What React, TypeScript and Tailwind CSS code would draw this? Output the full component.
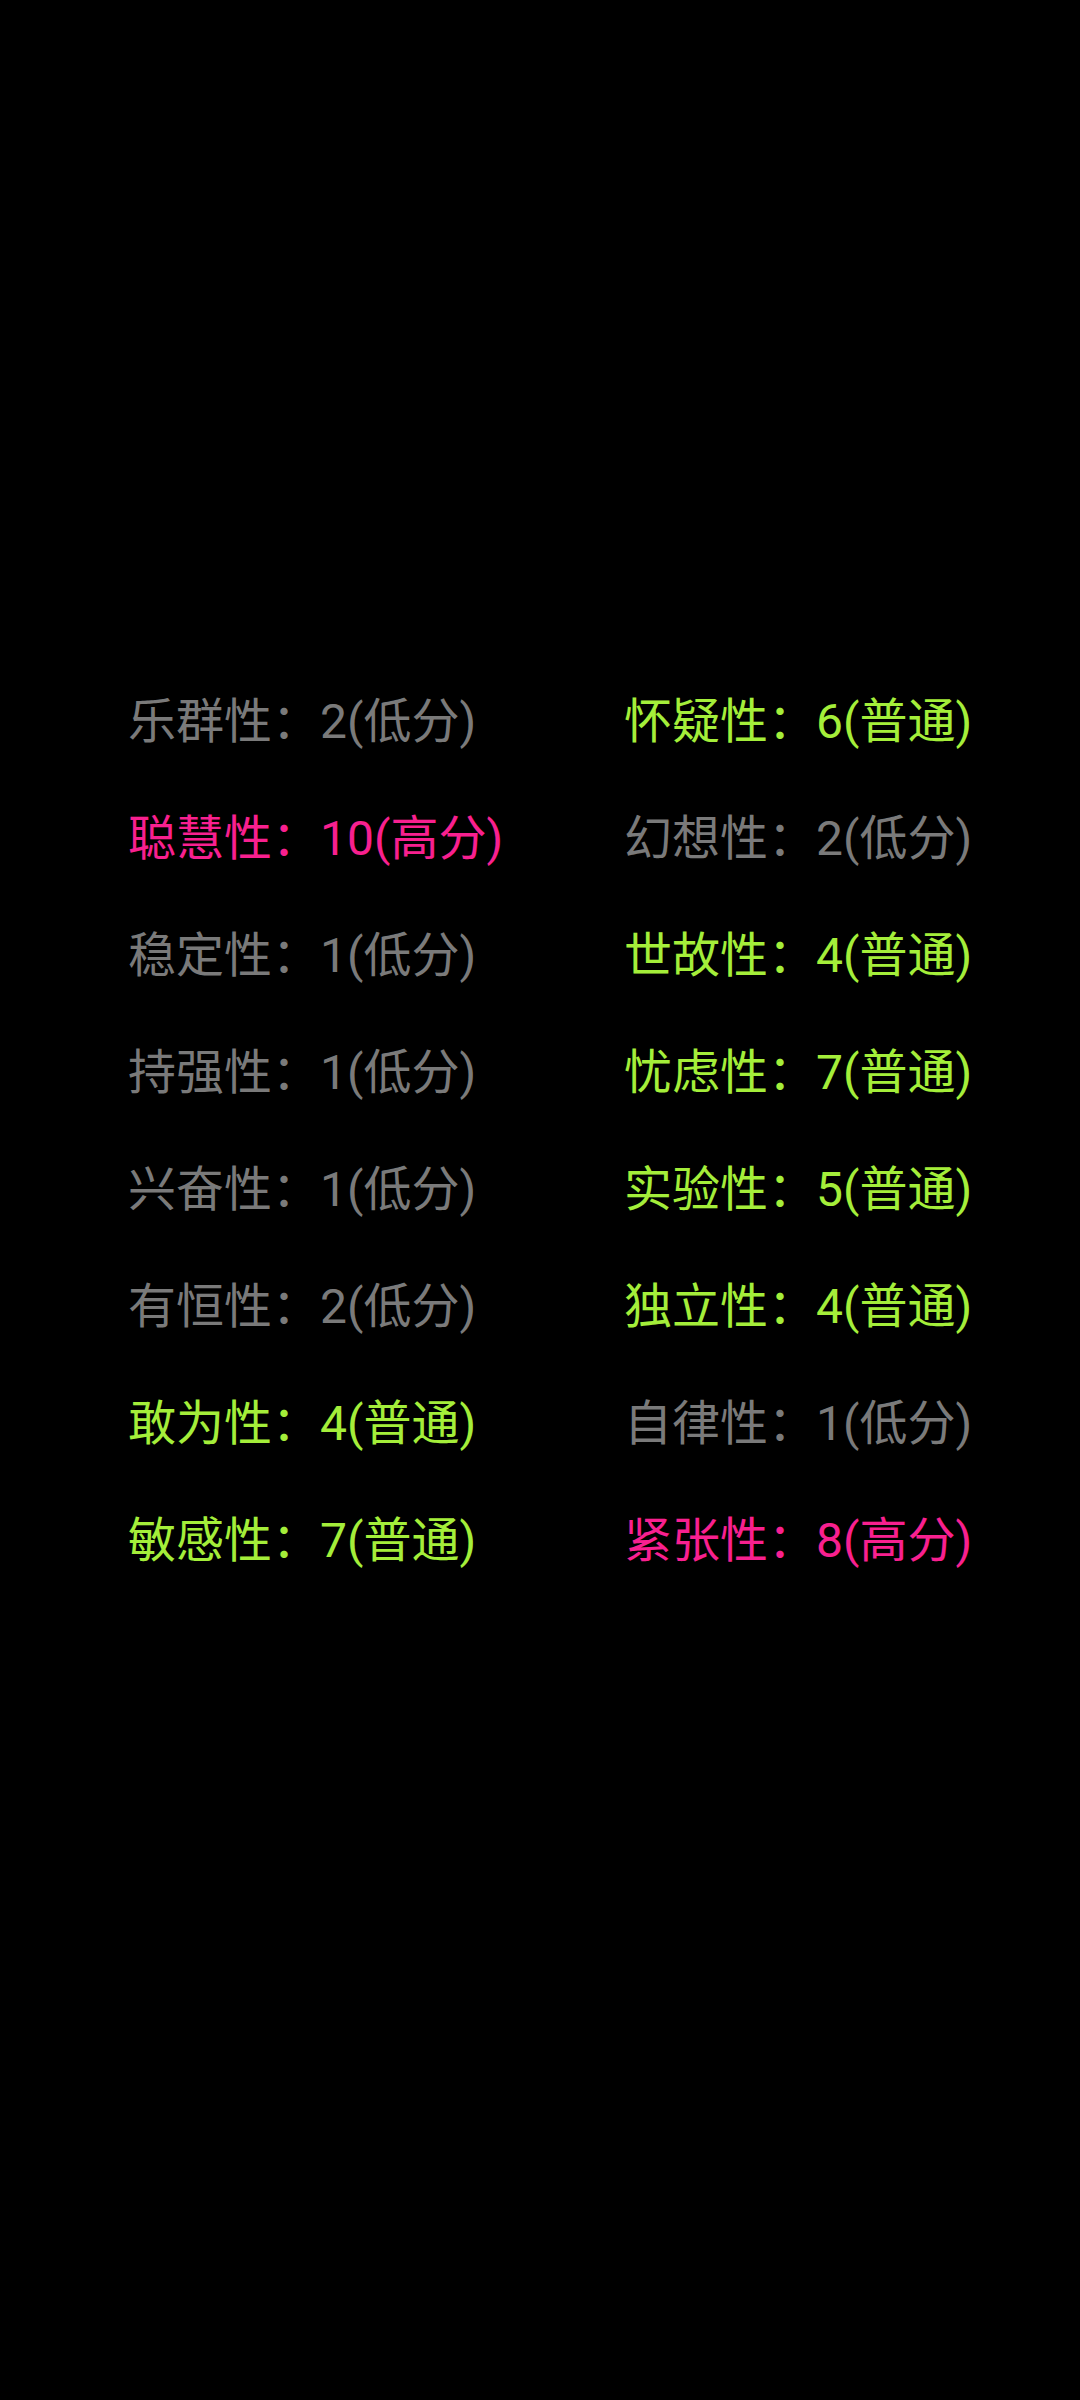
const rows: [string, string, string, string][] = [
  ["乐群性：2(低分)", "low", "怀疑性：6(普通)", "mid"],
  ["聪慧性：10(高分)", "high", "幻想性：2(低分)", "low"],
  ["稳定性：1(低分)", "low", "世故性：4(普通)", "mid"],
  ["持强性：1(低分)", "low", "忧虑性：7(普通)", "mid"],
  ["兴奋性：1(低分)", "low", "实验性：5(普通)", "mid"],
  ["有恒性：2(低分)", "low", "独立性：4(普通)", "mid"],
  ["敢为性：4(普通)", "mid", "自律性：1(低分)", "low"],
  ["敏感性：7(普通)", "mid", "紧张性：8(高分)", "high"],
];

const tone: Record<string, string> = {
  low: "text-[#7a7a7a]",
  mid: "text-[#a4ee3a]",
  high: "text-[#f8208f]",
};

export default function App() {
  return (
    <div
      className="min-h-[2400px] w-[1080px] bg-black pt-[663px]"
      style={{ fontFamily: 'Roboto, "Noto Sans CJK SC", sans-serif' }}
    >
      <div className="grid grid-cols-[496px_auto] pl-[128px]">
        {rows.map(([a, ta, b, tb], i) => (
          <div key={i} className="contents">
            <div className={`h-[117px] text-[48px] leading-[117px] ${tone[ta]}`}>{a}</div>
            <div className={`h-[117px] text-[48px] leading-[117px] ${tone[tb]}`}>{b}</div>
          </div>
        ))}
      </div>
    </div>
  );
}
